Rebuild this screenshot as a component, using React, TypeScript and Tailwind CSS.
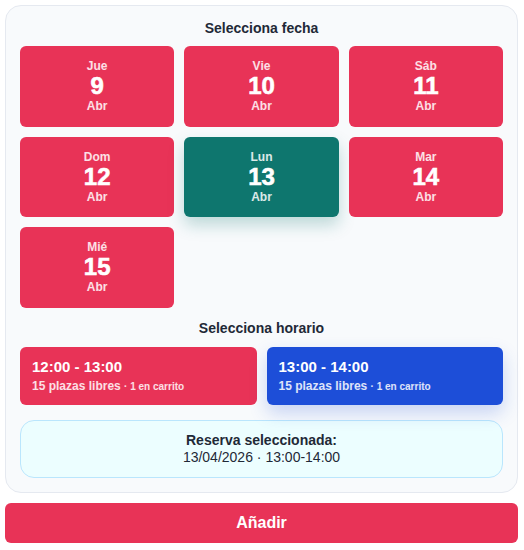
import React from "react";

type Day = { name: string; num: number; month: string };

const days: Day[] = [
  { name: "Jue", num: 9, month: "Abr" },
  { name: "Vie", num: 10, month: "Abr" },
  { name: "Sáb", num: 11, month: "Abr" },
  { name: "Dom", num: 12, month: "Abr" },
  { name: "Lun", num: 13, month: "Abr" },
  { name: "Mar", num: 14, month: "Abr" },
  { name: "Mié", num: 15, month: "Abr" },
];

const slots = [
  { time: "12:00 - 13:00", free: 15, cart: 1 },
  { time: "13:00 - 14:00", free: 15, cart: 1 },
];

export default function App() {
  const selectedDay = 13;
  const selectedSlot = 1;

  return (
    <div
      className="h-[550px] w-[524px] bg-white pl-[5px] pt-[5px]"
      style={{ fontFamily: '"Liberation Sans", Arial, sans-serif' }}
    >
      <div className="w-[513px]">
        <div className="rounded-2xl border border-[#e5e9f0] bg-[#f8fafc] px-[14px] pt-[12px] pb-[14px]">
          <h2 className="text-center text-[14px] font-bold leading-5 text-[#1f2937]">
            Selecciona fecha
          </h2>
          <div className="mt-[8px] grid grid-cols-3 gap-[10px]">
            {days.map((d) => {
              const active = d.num === selectedDay;
              return (
                <button
                  key={d.num}
                  className={
                    active
                      ? "flex h-[80.5px] flex-col items-center justify-center rounded-md bg-[#0e766e] text-white shadow-[0_8px_16px_rgba(15,118,110,0.25)]"
                      : "flex h-[80.5px] flex-col items-center justify-center rounded-md bg-[#e83357] text-white"
                  }
                >
                  <span className="text-[12px] font-bold leading-4 text-white/85">{d.name}</span>
                  <span className="text-[24px] font-extrabold leading-6 [-webkit-text-stroke:0.6px_white]">
                    {d.num}
                  </span>
                  <span className="text-[12px] font-bold leading-4 text-white/85">{d.month}</span>
                </button>
              );
            })}
          </div>

          <h2 className="mt-[10px] text-center text-[14px] font-bold leading-5 text-[#1f2937]">
            Selecciona horario
          </h2>
          <div className="mt-[9px] grid grid-cols-2 gap-[10px]">
            {slots.map((s, i) => {
              const active = i === selectedSlot;
              return (
                <button
                  key={s.time}
                  className={
                    active
                      ? "flex h-[58px] flex-col justify-center rounded-md bg-[#1d4ed8] px-3 text-left text-white shadow-[0_8px_18px_rgba(29,78,216,0.22)]"
                      : "flex h-[58px] flex-col justify-center rounded-md bg-[#e83357] px-3 text-left text-white"
                  }
                >
                  <span className="text-[15px] font-bold leading-5">{s.time}</span>
                  <span className="mt-[1px] text-[12px] font-bold leading-4 text-white/85">
                    {s.free} plazas libres{" "}
                    <span className="text-[10px]">· {s.cart} en carrito</span>
                  </span>
                </button>
              );
            })}
          </div>

          <div className="mt-[15px] rounded-[14px] border border-[#bae6fd] bg-[#ecfeff] py-[11px] text-center text-[14px] leading-[17px] text-[#1f2937]">
            <div className="font-bold">Reserva seleccionada:</div>
            <div>13/04/2026 · 13:00-14:00</div>
          </div>
        </div>

        <button className="mt-[10px] h-[40px] w-full rounded-md bg-[#e83357] text-[16px] font-bold text-white">
          Añadir
        </button>
      </div>
    </div>
  );
}
